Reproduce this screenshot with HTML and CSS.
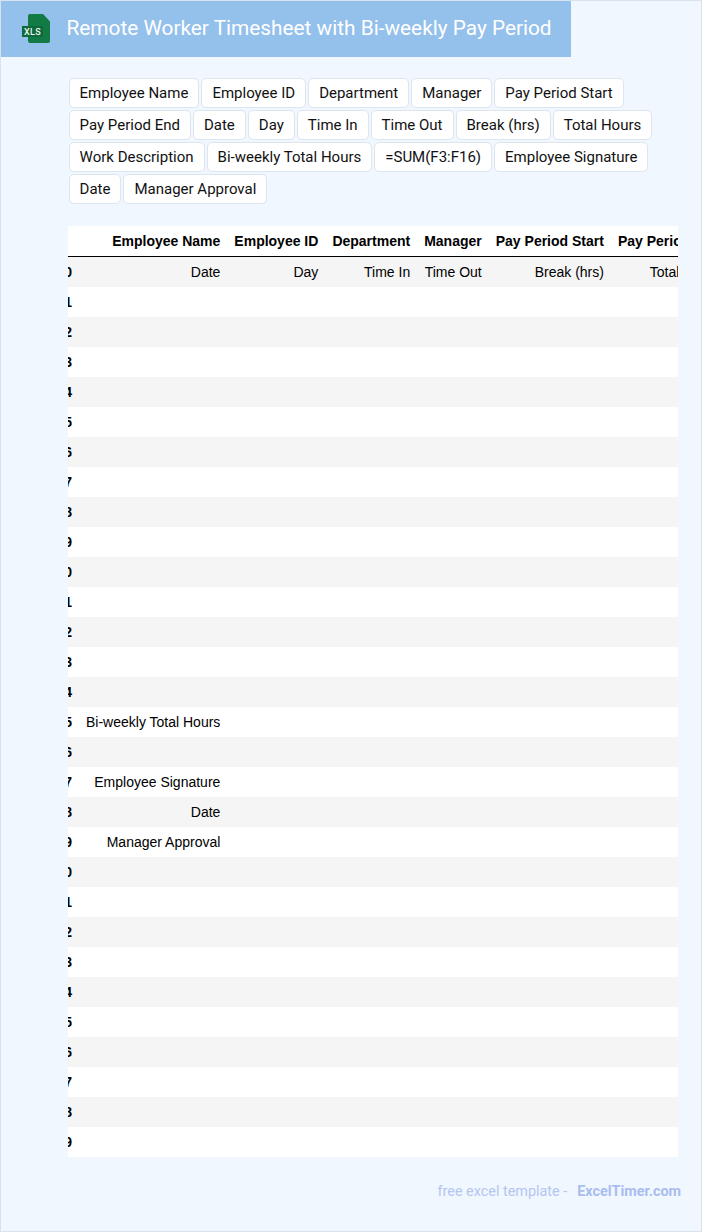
FILE: index.html
```html
<!DOCTYPE html>
<html lang="en">
<head>
<meta charset="utf-8">
<title>Remote Worker Timesheet with Bi-weekly Pay Period</title>
<link rel="stylesheet" href="styles.css">
</head>
<body>
<div class="page">
  <header class="banner">
    <svg class="logo" width="30" height="32" viewBox="0 0 30 32" aria-hidden="true">
      <path d="M9 1h13l7 7.500V28a2 2 0 0 1-2 2H9a2 2 0 0 1-2-2V3a2 2 0 0 1 2-2z" fill="#117a45"/>
      <rect x="1" y="13" width="21" height="11" fill="#0e6a3c"/>
      <text x="11.500" y="22" class="logo-text" text-anchor="middle">XLS</text>
    </svg>
    <h1 class="title">Remote Worker Timesheet with Bi-weekly Pay Period</h1>
  </header>
  <main class="content">
    <div class="chips">
      <span class="chip">Employee Name</span><span class="chip">Employee ID</span><span class="chip">Department</span><span class="chip">Manager</span><span class="chip">Pay Period Start</span><span class="chip">Pay Period End</span><span class="chip">Date</span><span class="chip">Day</span><span class="chip">Time In</span><span class="chip">Time Out</span><span class="chip">Break (hrs)</span><span class="chip">Total Hours</span><span class="chip">Work Description</span><span class="chip">Bi-weekly Total Hours</span><span class="chip">=SUM(F3:F16)</span><span class="chip">Employee Signature</span><span class="chip">Date</span><span class="chip">Manager Approval</span>
    </div>
    <div class="table-wrap">
      <table class="sheet">
        <thead>
          <tr><th></th><th>Employee Name</th><th>Employee ID</th><th>Department</th><th>Manager</th><th>Pay Period Start</th><th>Pay Period End</th></tr>
        </thead>
        <tbody>
          <tr><th>0</th><td>Date</td><td>Day</td><td>Time In</td><td>Time Out</td><td>Break (hrs)</td><td>Total Hours</td></tr>
          <tr><th>1</th><td></td><td></td><td></td><td></td><td></td><td></td></tr>
          <tr><th>2</th><td></td><td></td><td></td><td></td><td></td><td></td></tr>
          <tr><th>3</th><td></td><td></td><td></td><td></td><td></td><td></td></tr>
          <tr><th>4</th><td></td><td></td><td></td><td></td><td></td><td></td></tr>
          <tr><th>5</th><td></td><td></td><td></td><td></td><td></td><td></td></tr>
          <tr><th>6</th><td></td><td></td><td></td><td></td><td></td><td></td></tr>
          <tr><th>7</th><td></td><td></td><td></td><td></td><td></td><td></td></tr>
          <tr><th>8</th><td></td><td></td><td></td><td></td><td></td><td></td></tr>
          <tr><th>9</th><td></td><td></td><td></td><td></td><td></td><td></td></tr>
          <tr><th>10</th><td></td><td></td><td></td><td></td><td></td><td></td></tr>
          <tr><th>11</th><td></td><td></td><td></td><td></td><td></td><td></td></tr>
          <tr><th>12</th><td></td><td></td><td></td><td></td><td></td><td></td></tr>
          <tr><th>13</th><td></td><td></td><td></td><td></td><td></td><td></td></tr>
          <tr><th>14</th><td></td><td></td><td></td><td></td><td></td><td></td></tr>
          <tr><th>15</th><td>Bi-weekly Total Hours</td><td></td><td></td><td></td><td></td><td></td></tr>
          <tr><th>16</th><td></td><td></td><td></td><td></td><td></td><td></td></tr>
          <tr><th>17</th><td>Employee Signature</td><td></td><td></td><td></td><td></td><td></td></tr>
          <tr><th>18</th><td>Date</td><td></td><td></td><td></td><td></td><td></td></tr>
          <tr><th>19</th><td>Manager Approval</td><td></td><td></td><td></td><td></td><td></td></tr>
          <tr><th>20</th><td></td><td></td><td></td><td></td><td></td><td></td></tr>
          <tr><th>21</th><td></td><td></td><td></td><td></td><td></td><td></td></tr>
          <tr><th>22</th><td></td><td></td><td></td><td></td><td></td><td></td></tr>
          <tr><th>23</th><td></td><td></td><td></td><td></td><td></td><td></td></tr>
          <tr><th>24</th><td></td><td></td><td></td><td></td><td></td><td></td></tr>
          <tr><th>25</th><td></td><td></td><td></td><td></td><td></td><td></td></tr>
          <tr><th>26</th><td></td><td></td><td></td><td></td><td></td><td></td></tr>
          <tr><th>27</th><td></td><td></td><td></td><td></td><td></td><td></td></tr>
          <tr><th>28</th><td></td><td></td><td></td><td></td><td></td><td></td></tr>
          <tr><th>29</th><td></td><td></td><td></td><td></td><td></td><td></td></tr>
        </tbody>
      </table>
    </div>
  </main>
  <footer class="footer">
    <span>free excel template -</span><a class="brand" href="#">ExcelTimer.com</a>
  </footer>
</div>
</body>
</html>
```

FILE: styles.css
```css
* {
  box-sizing: border-box;
}

html,
body {
  margin: 0;
  padding: 0;
}

.page {
  width: 702px;
  height: 1232px;
  background: #f0f7ff;
  border: 1px solid #d9e3ee;
  font-family: Roboto, "Liberation Sans", sans-serif;
  overflow: hidden;
}

.banner {
  width: 570px;
  height: 56px;
  background: #94c0ec;
  display: flex;
  align-items: center;
  padding-left: 20px;
  gap: 15.500px;
}

.logo {
  flex: none;
}

.logo-text {
  font-family: Roboto, sans-serif;
  font-size: 9px;
  font-weight: 500;
  letter-spacing: 0.4px;
  fill: #eef6f0;
}

.title {
  margin: 0 0 3px;
  font-size: 20.800px;
  font-weight: 400;
  color: #ffffff;
  white-space: nowrap;
}

.content {
  padding: 21px 23px 0 67px;
}

.chips {
  display: flex;
  flex-wrap: wrap;
  gap: 2px;
  padding-left: 0.600px;
}

.chip {
  height: 30px;
  padding: 0 10px;
  display: flex;
  align-items: center;
  background: #ffffff;
  border: 1px solid #dde5ee;
  border-radius: 5px;
  font-size: 15px;
  color: #111111;
  white-space: nowrap;
}

.table-wrap {
  margin-top: 22px;
  overflow: hidden;
}

.sheet {
  margin-left: -18.6px;
  border-collapse: collapse;
  background: #ffffff;
  font-family: "Liberation Sans", Arial, sans-serif;
  font-size: 14px;
  color: #000000;
  white-space: nowrap;
}

.sheet th,
.sheet td {
  padding: 7px;
  height: 30px;
  text-align: right;
  font-weight: 400;
}

.sheet th {
  font-weight: 700;
}

.sheet thead tr {
  border-bottom: 1px solid #000000;
}

.sheet tbody tr:nth-child(odd) {
  background: #f5f5f5;
}

.footer {
  margin-top: 26px;
  padding-right: 20px;
  display: flex;
  justify-content: flex-end;
  gap: 10px;
  font-size: 14.400px;
  color: #b4c6f0;
}

.brand {
  font-weight: 700;
  color: #a9bdf0;
  text-decoration: none;
}
```
